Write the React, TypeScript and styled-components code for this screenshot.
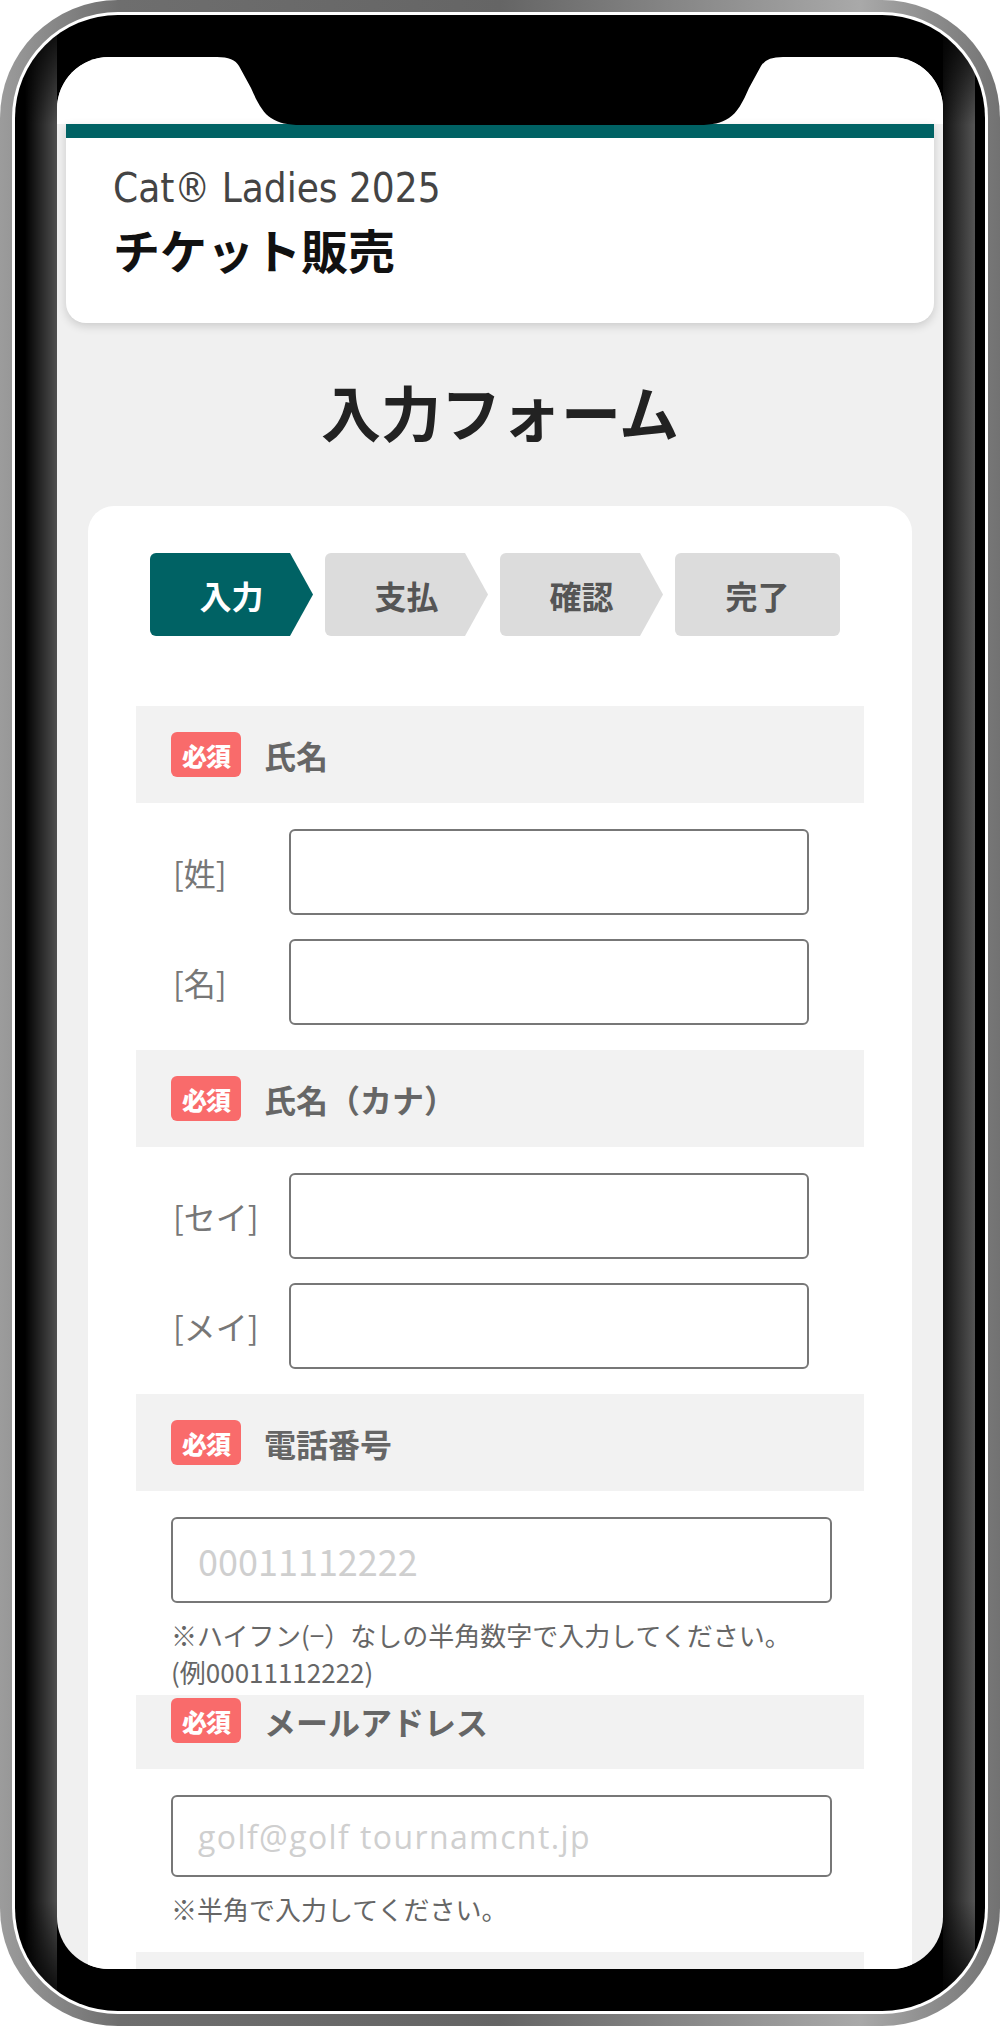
import React from "react";
import styled, { createGlobalStyle } from "styled-components";

const GlobalStyle = createGlobalStyle`
  * { box-sizing: border-box; }
  html, body { margin: 0; padding: 0; background: #fff; }
  #root { width: 1000px; height: 2026px; }
`;

const jp = `"Noto Sans CJK JP", "Noto Sans", sans-serif`;

const Frame = styled.div`
  width: 1000px;
  height: 2026px;
  padding: 12px;
  border-radius: 118px;
  background: linear-gradient(90deg, #9c9c9c 0%, #6e6e6e 12%, #656565 50%, #a9a9a9 86%, #727272 100%);
`;

const Ring = styled.div`
  height: 100%;
  padding: 3px;
  border-radius: 106px;
  background: #fff;
`;

const Bezel = styled.div`
  height: 100%;
  padding: 42px;
  border-radius: 103px;
  background:
    linear-gradient(180deg, #000 0, rgba(0, 0, 0, 0) 110px, rgba(0, 0, 0, 0) calc(100% - 110px), #000 100%),
    linear-gradient(90deg, #000 0, #000 10px, #505050 42px, #000 42px, #000 calc(100% - 42px), #111 calc(100% - 42px), #555 calc(100% - 10px), #000 calc(100% - 10px));
`;

const Screen = styled.div`
  position: relative;
  height: 100%;
  border-radius: 52px;
  overflow: hidden;
  background: #f0f0f0;
`;

const Notch = styled.svg`
  position: absolute;
  top: 0;
  left: 0;
  z-index: 5;
`;

const StatusBar = styled.div`
  height: 67px;
  background: #fff;
`;

const HeaderCard = styled.header`
  margin: 0 9px;
  padding: 27px 47px 46px;
  background: #fff;
  border-top: 14px solid #006264;
  border-radius: 0 0 20px 20px;
  box-shadow: 0 3px 10px rgba(0, 0, 0, 0.16);
`;

const EventName = styled.div`
  font-family: "DejaVu Sans Condensed", "DejaVu Sans", sans-serif;
  font-stretch: condensed;
  font-size: 40px;
  line-height: 46px;
  color: #444;
`;

const SalesTitle = styled.div`
  margin-top: 10px;
  font-family: ${jp};
  font-size: 47px;
  font-weight: 700;
  line-height: 56px;
  color: #111;
`;

const PageTitle = styled.h1`
  margin: 53px 0 60px;
  text-align: center;
  font-family: ${jp};
  font-size: 60px;
  font-weight: 700;
  line-height: 70px;
  color: #222;
`;

const FormCard = styled.main`
  margin: 0 31px;
  padding: 47px 48px 0;
  background: #fff;
  border-radius: 26px 26px 0 0;
`;

const Steps = styled.ol`
  display: flex;
  gap: 12px;
  margin: 0 0 70px 14px;
  padding: 0;
  list-style: none;
`;

const Step = styled.li<{ $active?: boolean; $last?: boolean }>`
  width: ${(p) => (p.$last ? 165 : 163)}px;
  height: 83px;
  display: flex;
  align-items: center;
  justify-content: center;
  font-family: ${jp};
  font-size: 32px;
  font-weight: 700;
  color: ${(p) => (p.$active ? "#fff" : "#555")};
  background: ${(p) => (p.$active ? "#006264" : "#dcdcdc")};
  border-radius: 6px;
  clip-path: ${(p) =>
    p.$last ? "none" : "polygon(0 0, calc(100% - 23px) 0, 100% 50%, calc(100% - 23px) 100%, 0 100%)"};
`;

const FieldHead = styled.div`
  height: 97px;
  display: flex;
  align-items: center;
  gap: 23px;
  padding-left: 35px;
  background: #f2f2f2;
`;

const Badge = styled.span`
  width: 70px;
  height: 45px;
  display: flex;
  align-items: center;
  justify-content: center;
  border-radius: 6px;
  background: #f96b6b;
  color: #fff;
  font-family: ${jp};
  font-size: 25px;
  font-weight: 900;
  letter-spacing: -1px;
`;

const FieldLabel = styled.span`
  font-family: ${jp};
  font-size: 32px;
  font-weight: 700;
  color: #666;
`;

const FieldBody = styled.div<{ $overlap?: boolean }>`
  display: flex;
  flex-direction: column;
  gap: 24px;
  padding: 26px 0 ${(p) => (p.$overlap ? 0 : 25)}px 35px;
`;

const ContactBody = styled(FieldBody)`
  gap: 0;
`;

const NameRow = styled.label`
  display: flex;
  align-items: center;
`;

const RowLabel = styled.span`
  width: 118px;
  padding-left: 2px;
  font-family: ${jp};
  font-size: 32px;
  color: #777;
`;

const TextInput = styled.input<{ $w: number; $h: number; $latin?: boolean }>`
  width: ${(p) => p.$w}px;
  height: ${(p) => p.$h}px;
  padding: 0 25px;
  border: 2px solid #777;
  border-radius: 6px;
  background: #fff;
  font-family: ${(p) => (p.$latin ? `"Open Sans", sans-serif` : jp)};
  font-size: ${(p) => (p.$latin ? 32 : 36)}px;
  letter-spacing: ${(p) => (p.$latin ? 1.4 : 0)}px;
  line-height: 50px;
  color: #333;
  outline: none;
  &::placeholder {
    color: #cfcfcf;
  }
`;

const Note = styled.p<{ $overlap?: boolean }>`
  position: relative;
  z-index: 1;
  margin: 13px 0 ${(p) => (p.$overlap ? -23 : 0)}px ${(p) => (p.$overlap ? -35 : 0)}px;
  padding: 0 0 ${(p) => (p.$overlap ? 5 : 0)}px ${(p) => (p.$overlap ? 35 : 0)}px;
  background: #fff;
  font-family: ${jp};
  font-size: 26px;
  line-height: 37px;
  color: #666;
`;

const steps = ["入力", "支払", "確認", "完了"];

const Field = ({ label, children }: { label: string; children: React.ReactNode }) => (
  <>
    <FieldHead>
      <Badge>必須</Badge>
      <FieldLabel>{label}</FieldLabel>
    </FieldHead>
    {children}
  </>
);

export default () => {
  return (
    <>
      <GlobalStyle />
      <Frame>
        <Ring>
          <Bezel>
            <Screen>
              <Notch width="886" height="68" viewBox="0 0 886 68">
                <path
                  d="M160 0 Q177 0 182 9 L194 31 C200 45 206 56 214 61 C222 66 230 68 244 68 H642 C656 68 664 66 672 61 C680 56 686 45 692 31 L704 9 Q709 0 726 0 Z"
                  fill="#000"
                />
              </Notch>
              <StatusBar />
              <HeaderCard>
                <EventName>Cat® Ladies 2025</EventName>
                <SalesTitle>チケット販売</SalesTitle>
              </HeaderCard>
              <PageTitle>入力フォーム</PageTitle>
              <FormCard>
                <Steps>
                  {steps.map((s, i) => (
                    <Step key={s} $active={i === 0} $last={i === steps.length - 1}>
                      {s}
                    </Step>
                  ))}
                </Steps>

                <Field label="氏名">
                  <FieldBody>
                    <NameRow>
                      <RowLabel>[姓]</RowLabel>
                      <TextInput $w={520} $h={86} />
                    </NameRow>
                    <NameRow>
                      <RowLabel>[名]</RowLabel>
                      <TextInput $w={520} $h={86} />
                    </NameRow>
                  </FieldBody>
                </Field>

                <Field label="氏名（カナ）">
                  <FieldBody>
                    <NameRow>
                      <RowLabel>[セイ]</RowLabel>
                      <TextInput $w={520} $h={86} />
                    </NameRow>
                    <NameRow>
                      <RowLabel>[メイ]</RowLabel>
                      <TextInput $w={520} $h={86} />
                    </NameRow>
                  </FieldBody>
                </Field>

                <Field label="電話番号">
                  <ContactBody $overlap>
                    <TextInput $w={661} $h={86} placeholder="00011112222" />
                    <Note $overlap>
                      ※ハイフン(−）なしの半角数字で入力してください。
                      <br />
                      (例00011112222)
                    </Note>
                  </ContactBody>
                </Field>

                <Field label="メールアドレス">
                  <ContactBody>
                    <TextInput $w={661} $h={82} $latin placeholder="golf@golf tournamcnt.jp" />
                    <Note>※半角で入力してください。</Note>
                  </ContactBody>
                </Field>

                {/* next field, only the top of its bar is on screen */}
                <FieldHead />
              </FormCard>
            </Screen>
          </Bezel>
        </Ring>
      </Frame>
    </>
  );
};
